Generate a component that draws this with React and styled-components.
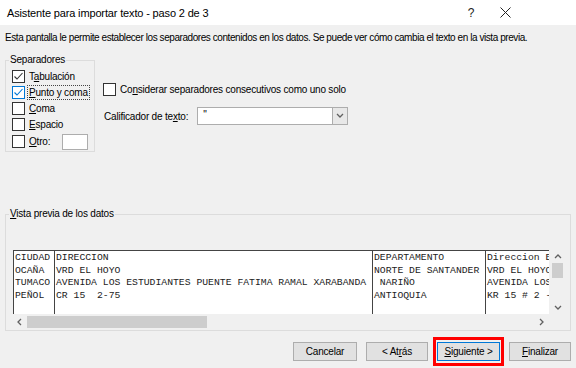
import React from 'react';
import styled, { createGlobalStyle } from 'styled-components';

const GlobalStyle = createGlobalStyle`
  body {
    margin: 0;
    background: #f0f0f0;
  }
`;

const Dialog = styled.div`
  width: 576px;
  height: 368px;
  display: flex;
  flex-direction: column;
  background: #f0f0f0;
  font-family: "Liberation Sans", Arial, sans-serif;
  font-size: 10px;
  color: #000;
  overflow: hidden;
`;

const TitleBar = styled.div`
  height: 25px;
  flex: none;
  background: #fff;
  display: flex;
  align-items: center;
  padding: 0 54px 0 7px;
  font-size: 11px;
`;

const Title = styled.div`
  flex: 1;
  letter-spacing: -0.15px;
`;

const TitleButton = styled.div`
  width: 34px;
  display: flex;
  justify-content: center;
  align-items: center;
  font-size: 12px;
  color: #222;
`;

const Body = styled.div`
  flex: 1;
  display: flex;
  flex-direction: column;
  padding: 0 5px;
`;

const Description = styled.div`
  margin-top: 6px;
  line-height: 13px;
  letter-spacing: -0.43px;
  white-space: nowrap;
`;

const TopRow = styled.div`
  display: flex;
  margin-top: 10px;
`;

const Group = styled.fieldset`
  margin: 0;
  border: 1px solid #dcdcdc;
  padding: ${(p) => p.$pad};
  width: ${(p) => p.$width};
  height: ${(p) => p.$height};
  box-sizing: border-box;
  min-width: 0;
`;

const Legend = styled.legend`
  padding: 0 1px;
  margin-left: ${(p) => p.$shift}px;
  line-height: 12px;
  letter-spacing: -0.2px;
`;

const CheckRow = styled.label`
  display: flex;
  align-items: center;
  height: ${(p) => p.$height || '16.25px'};
  gap: 3px;
  white-space: nowrap;
  letter-spacing: -0.2px;
`;

const Box = styled.span`
  width: 13px;
  height: 13px;
  box-sizing: border-box;
  border: 1px solid ${(p) => (p.$focus ? '#0078d7' : '#333')};
  background: #fff;
  display: inline-flex;
  flex: none;
`;

const LabelText = styled.span`
  padding: 1px 1px;
  outline: ${(p) => (p.$focus ? '1px dotted #444' : 'none')};
`;

const Key = styled.u`
  text-decoration: underline;
`;

const OtherInput = styled.span`
  width: 26px;
  height: 16px;
  box-sizing: border-box;
  border: 1px solid #adadad;
  background: #fff;
  margin-left: 8px;
`;

const Options = styled.div`
  display: flex;
  flex-direction: column;
  margin-left: 8px;
  padding-top: 29px;
`;

const QualifierRow = styled.div`
  display: flex;
  align-items: center;
  margin-top: 11px;
  padding-left: 1px;
  letter-spacing: -0.2px;
`;

const Combo = styled.div`
  width: 151px;
  height: 18px;
  box-sizing: border-box;
  margin-left: 9px;
  border: 1px solid #adadad;
  background: #fff;
  display: flex;
`;

const ComboValue = styled.span`
  flex: 1;
  padding: 1px 5px;
  line-height: 12px;
`;

const ComboButton = styled.span`
  width: 14px;
  border-left: 1px solid #adadad;
  background: #e8e8e8;
  display: flex;
  align-items: center;
  justify-content: center;
`;

const PreviewGroup = styled(Group)`
  margin-top: 56px;
`;

const Preview = styled.div`
  display: grid;
  grid-template-columns: 536px 17px;
  grid-template-rows: 64px 16px;
`;

const DataArea = styled.div`
  background: #fff;
  border-top: 1px solid #444;
  border-left: 1px solid #444;
  display: flex;
  overflow: hidden;
  font-family: "Liberation Mono", "Courier New", monospace;
  font-size: 9.75px;
  color: #222;
`;

const Column = styled.div`
  width: ${(p) => p.$width}px;
  flex: none;
  border-right: 1px solid #444;
  padding: 1px 0 0 1px;
  box-sizing: border-box;
  overflow: hidden;
  white-space: pre;
`;

const Cell = styled.div`
  height: 12.7px;
  line-height: 12.7px;
`;

const ScrollTrack = styled.div`
  background: #f0f0f0;
  display: flex;
  flex-direction: ${(p) => (p.$vertical ? 'column' : 'row')};
  align-items: center;
`;

const Arrow = styled.span`
  width: ${(p) => (p.$vertical ? '17px' : '14px')};
  height: ${(p) => (p.$vertical ? '13px' : '16px')};
  flex: none;
  display: flex;
  align-items: center;
  justify-content: center;
`;

const Thumb = styled.span`
  background: #cdcdcd;
  flex: none;
  width: ${(p) => p.$w};
  height: ${(p) => p.$h};
`;

const Spacer = styled.span`
  flex: 1;
`;

const ButtonRow = styled.div`
  display: flex;
  justify-content: flex-end;
  align-items: center;
  margin-top: 6px;
`;

const Button = styled.button`
  width: ${(p) => p.$width}px;
  height: 19px;
  margin: 0 0 0 ${(p) => p.$gap || 0}px;
  padding: 0;
  background: #e1e1e1;
  border: 1px solid ${(p) => (p.$default ? '#0078d7' : '#adadad')};
  font-family: inherit;
  font-size: 10px;
  color: #000;
  letter-spacing: -0.2px;
`;

const Highlight = styled.div`
  border: 3px solid #f00;
  padding: 2px 1px;
  margin-left: 5px;
  display: flex;
`;

const Chevron = ({ dir }) => {
  const d = {
    left: 'M5 1 L2 4 L5 7',
    right: 'M2 1 L5 4 L2 7',
    up: 'M1 5 L4 2 L7 5',
    down: 'M1 2 L4 5 L7 2',
  }[dir];
  return (
    <svg width="8" height="8" viewBox="0 0 8 8">
      <path d={d} fill="none" stroke="#606060" strokeWidth="1.3" />
    </svg>
  );
};

const Check = ({ color }) => (
  <svg width="11" height="11" viewBox="0 0 11 11">
    <path d="M1.5 5.5 L4 8 L9.5 2" fill="none" stroke={color} strokeWidth="1.1" />
  </svg>
);

function CheckOption({ checked, focus, children, height }) {
  return (
    <CheckRow $height={height}>
      <Box $focus={focus}>{checked && <Check color={focus ? '#0078d7' : '#333'} />}</Box>
      <LabelText $focus={focus}>{children}</LabelText>
    </CheckRow>
  );
}

const columns = [
  { width: 41, cells: ['CIUDAD', 'OCAÑA', 'TUMACO', 'PEÑOL'] },
  {
    width: 318,
    cells: ['DIRECCION', 'VRD EL HOYO', 'AVENIDA LOS ESTUDIANTES PUENTE FATIMA RAMAL XARABANDA', 'CR 15  2-75'],
  },
  { width: 113, cells: ['DEPARTAMENTO', 'NORTE DE SANTANDER', ' NARIÑO', 'ANTIOQUIA'] },
  { width: 64, cells: ['Direccion E', 'VRD EL HOYO', 'AVENIDA LOS', 'KR 15 # 2 -'] },
];

export default function App() {
  return (
    <>
      <GlobalStyle />
      <Dialog>
        <TitleBar>
          <Title>Asistente para importar texto - paso 2 de 3</Title>
          <TitleButton>?</TitleButton>
          <TitleButton>
            <svg width="11" height="11" viewBox="0 0 11 11">
              <path d="M0.5 0.5 L10.5 10.5 M10.5 0.5 L0.5 10.5" stroke="#222" strokeWidth="1" />
            </svg>
          </TitleButton>
        </TitleBar>
        <Body>
          <Description>
            Esta pantalla le permite establecer los separadores contenidos en los datos. Se puede ver cómo cambia el
            texto en la vista previa.
          </Description>
          <TopRow>
            <Group $width="90px" $height="98px" $pad="2px 4px 0 6px">
              <Legend $shift={-3}>Separadores</Legend>
              <CheckOption checked>
                T<Key>a</Key>bulación
              </CheckOption>
              <CheckOption checked focus>
                <Key>P</Key>unto y coma
              </CheckOption>
              <CheckOption>
                <Key>C</Key>oma
              </CheckOption>
              <CheckOption>
                <Key>E</Key>spacio
              </CheckOption>
              <CheckRow $height="17px">
                <Box />
                <LabelText>
                  <Key>O</Key>tro:
                </LabelText>
                <OtherInput />
              </CheckRow>
            </Group>
            <Options>
              <CheckOption height="13px">
                Co<Key>n</Key>siderar separadores consecutivos como uno solo
              </CheckOption>
              <QualifierRow>
                Calificador de te<Key>x</Key>to:
                <Combo>
                  <ComboValue>"</ComboValue>
                  <ComboButton>
                    <Chevron dir="down" />
                  </ComboButton>
                </Combo>
              </QualifierRow>
            </Options>
          </TopRow>
          <PreviewGroup $width="566px" $height="123px" $pad="30px 3px 0 7px">
            <Legend $shift={-4}>
              <Key>V</Key>ista previa de los datos
            </Legend>
            <Preview>
              <DataArea>
                {columns.map((col, i) => (
                  <Column key={i} $width={col.width}>
                    {col.cells.map((c, j) => (
                      <Cell key={j}>{c}</Cell>
                    ))}
                  </Column>
                ))}
              </DataArea>
              <ScrollTrack $vertical>
                <Arrow $vertical>
                  <Chevron dir="up" />
                </Arrow>
                <Thumb $w="11px" $h="15px" />
                <Spacer />
                <Arrow $vertical>
                  <Chevron dir="down" />
                </Arrow>
              </ScrollTrack>
              <ScrollTrack>
                <Arrow>
                  <Chevron dir="left" />
                </Arrow>
                <Thumb $w="180px" $h="12px" />
                <Spacer />
                <Arrow>
                  <Chevron dir="right" />
                </Arrow>
              </ScrollTrack>
              <ScrollTrack />
            </Preview>
          </PreviewGroup>
          <ButtonRow>
            <Button $width={64}>Cancelar</Button>
            <Button $width={62} $gap={9}>
              &lt; At<Key>r</Key>ás
            </Button>
            <Highlight>
              <Button $width={63} $default>
                <Key>S</Key>iguiente &gt;
              </Button>
            </Highlight>
            <Button $width={62} $gap={5}>
              <Key>F</Key>inalizar
            </Button>
          </ButtonRow>
        </Body>
      </Dialog>
    </>
  );
}
